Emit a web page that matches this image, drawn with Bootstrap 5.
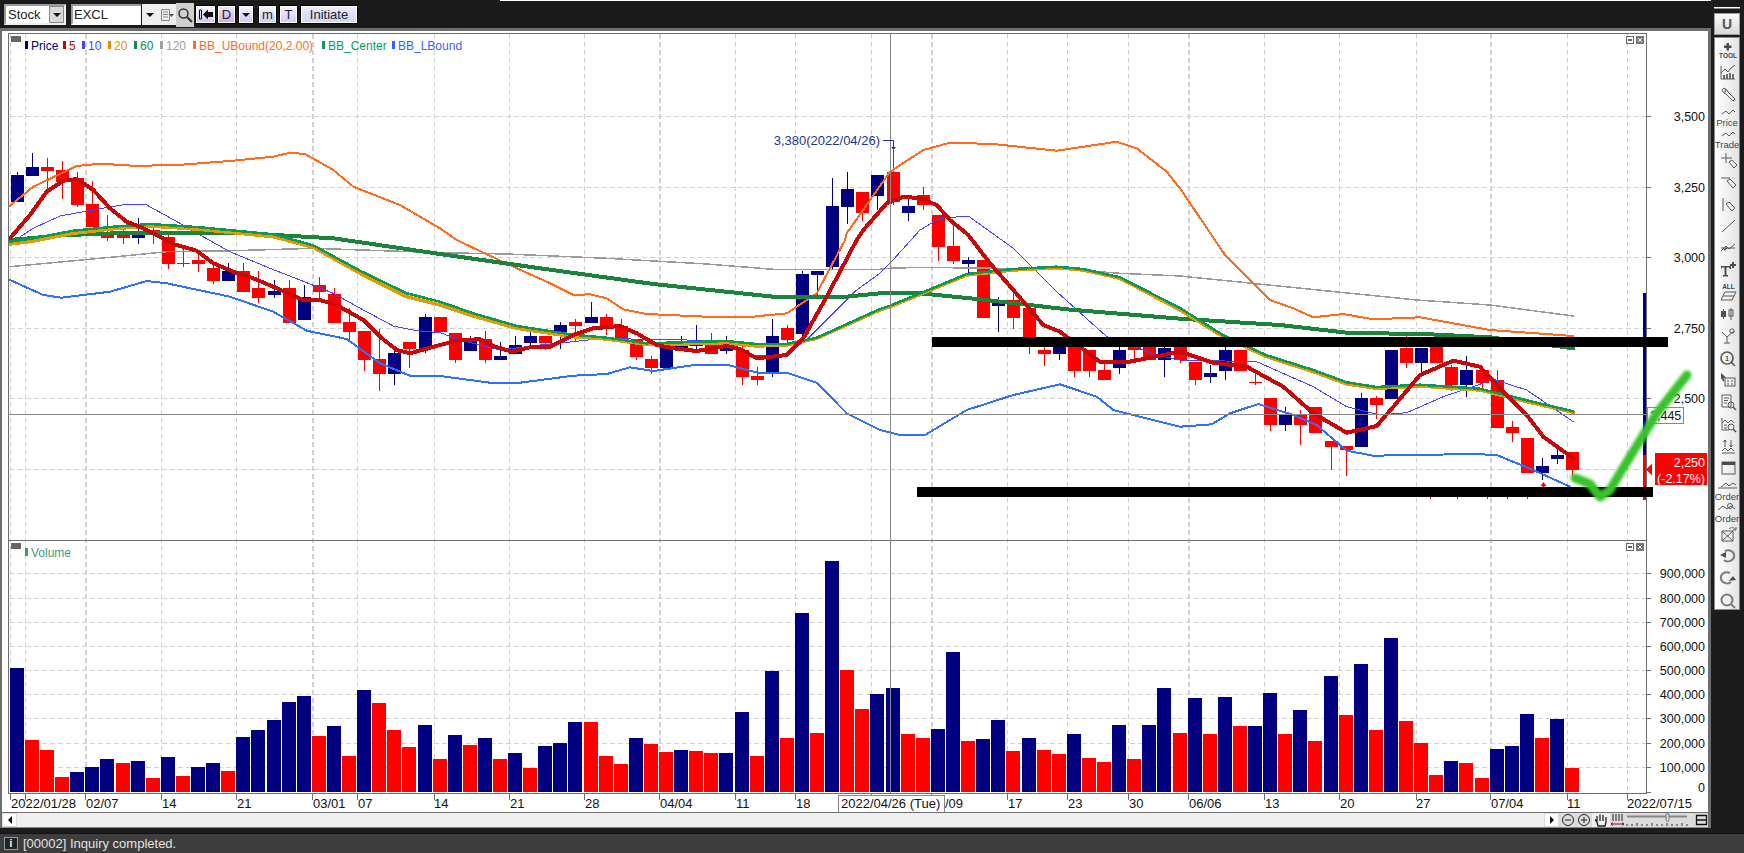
<!DOCTYPE html>
<html lang="en">
<head>
    <meta charset="UTF-8">
    <meta name="viewport" content="width=device-width, initial-scale=1.0">
    <title>Stock Chart</title>
    <link href="https://cdn.jsdelivr.net/npm/bootstrap@5.3.0/dist/css/bootstrap.min.css" rel="stylesheet">
    <style>
        html, body { height: 100%; }
        body { background: #1c1c1c; overflow: hidden; font: 12px/1 "Liberation Sans", Arial, sans-serif; color: #222; }
        .app-left { width: 1711px; }
        .app-right { width: 33px; padding-left: 3px; }
        .top-line { height: 1px; background: #fff; margin-left: 500px; }
        .top-bar { height: 27px; padding-left: 4px; background: #1a1a1a; }
        .stock-box { width: 62px; height: 21px; background: #fff; border: 2px solid #9a9a9a; border-right-color: #eee; border-bottom-color: #eee; font-size: 13px; padding-left: 2px; }
        .code-box { width: 70px; height: 21px; background: #fff; border: 2px solid #9a9a9a; border-right: 0; border-bottom-color: #fff; font-size: 13px; padding-left: 1px; margin-left: 5px; }
        .arrow-box { width: 15px; height: 100%; background: #d8d8d8; border: 1px solid #8a8a8a; margin-left: auto; }
        .down-tri { width: 0; height: 0; border-left: 4px solid transparent; border-right: 4px solid transparent; border-top: 4px solid #111; }
        .light-cell { height: 21px; background: #eeeeee; }
        .w-drop { width: 16px; margin-left: 1px; }
        .w-memo { width: 18px; }
        .mag-cell { width: 18px; height: 24px; background: #cfcfcf; margin-right: 1px; }
        .btn.tb-btn { height: 19px; padding: 0; border: 1px solid #000; border-radius: 0; box-shadow: inset 0 0 0 1px #fff; background: linear-gradient(#f6f6ff, #c9c9f4); color: #222; font-size: 13px; line-height: 16px; }
        .btn.tb-purple { background: linear-gradient(#f2e4ff, #d2a8ee); }
        .btn.tb-plain { background: linear-gradient(#ececff, #d2d2f4); }
        .w-21 { width: 21px; }
        .w-19 { width: 19px; }
        .w-16 { width: 16px; }
        .w-58 { width: 58px; }
        .gap-l1 { margin-left: 1px; }
        .gap-l2 { margin-left: 2px; }
        .chart-win { height: 800px; background: #fff; border-left: 2px solid #6e6e6e; border-top: 3px solid #6e6e6e; border-right: 3px solid #6e6e6e; }
        .chart-svg { display: block; }
        .scroll-row { height: 16px; background: #f0f0f0; border-top: 1px solid #6e6e6e; border-bottom: 1px solid #8a8a8a; }
        .scroll-arrow { width: 15px; background: #fff; border: 1px solid #dcdcdc; }
        .tri-left { width: 0; height: 0; border-top: 4px solid transparent; border-bottom: 4px solid transparent; border-right: 4px solid #111; }
        .tri-right { width: 0; height: 0; border-top: 4px solid transparent; border-bottom: 4px solid transparent; border-left: 4px solid #111; }
        .zoom-tools { width: 149px; background: #dcdcdc; }
        .hand-cell { background: #efefef; }
        .gap-strip { height: 5px; }
        .status-bar { height: 20px; background: #3d3d3d; border-top: 1px solid #111; color: #e4e4e4; font-size: 13px; padding-left: 4px; }
        .info-box { width: 14px; height: 13px; background: #222; border: 1px solid #999; color: #fff; font-weight: 700; font-size: 10px; margin-right: 5px; }
        .right-line { height: 2px; background: #fff; margin: 7px 0 4px; width: 26px; border-bottom: 1px solid #888; }
        .u-btn { width: 26px; height: 22px; background: linear-gradient(#fdfdfd, #d8d8d8); border: 1px solid #9c9c9c; color: #555; font-weight: 700; font-size: 14px; margin-bottom: 2px; }
        .tool-box { width: 26px; height: 573px; padding-top: 2px; background: linear-gradient(90deg, #fff, #e4e4e4); border: 1px solid #8a8a8a; border-right-color: #777; }
        .tool-item { display: block; width: 24px; height: 22px; }
        .tool-item path, .tool-item rect, .tool-item circle, .tool-item polyline { fill: none; stroke: #5a5a5a; stroke-width: 1; }
        .tool-item .solid { fill: #4c4c4c; stroke: none; }
        .tool-item .heavy { stroke-width: 1.7; }
        .tool-item .pale { stroke: #7c7c7c; stroke-width: 2; }
        .tool-item text { font-family: "Liberation Sans", Arial, sans-serif; fill: #444; text-anchor: middle; }
        .tool-item .tiny { font-size: 6.5px; font-weight: 700; }
        .tool-item .word { font-size: 9.5px; }
        .chart-svg text { font-family: "Liberation Sans", Arial, sans-serif; font-size: 12.5px; fill: #111; }
        .chart-svg .tick-r { text-anchor: end; }
        .chart-svg .legend { font-size: 12px; }
        .chart-svg .date-tx { font-size: 13px; }
        .chart-svg .ink-white { fill: #fff; }
        .chart-svg .crisp { shape-rendering: crispEdges; }
        .chart-svg .note-tx { font-size: 13px; fill: #1c3590; }
        .check-mark { filter: blur(1.5px); }
    </style>
</head>
<body>
    <div class="d-flex">
        <div class="app-left">
            <div class="top-line"></div>
            <div class="top-bar d-flex align-items-center">
                <div class="stock-box d-flex align-items-center">Stock<span class="arrow-box d-flex align-items-center justify-content-center"><span class="down-tri"></span></span></div>
                <div class="code-box d-flex align-items-center">EXCL</div>
                <div class="light-cell w-drop d-flex align-items-center justify-content-center"><span class="down-tri"></span></div>
                <div class="light-cell w-memo d-flex align-items-center justify-content-center">
                    <svg width="15" height="14" viewBox="0 0 15 14"><path d="M1.5 1.5h8v11h-8zM3 4h5M3 6.500h5M3 9h5" fill="none" stroke="#888"/><path d="M9 6h5l-2.500 3z" fill="#555"/></svg>
                </div>
                <div class="mag-cell d-flex align-items-center justify-content-center">
                    <svg width="16" height="16" viewBox="0 0 16 16"><circle cx="6.500" cy="6.500" r="4.500" fill="none" stroke="#333" stroke-width="1.500"/><path d="M10 10l5 5" stroke="#333" stroke-width="2.200"/></svg>
                </div>
                <div class="d-flex align-items-center">
                    <button class="btn tb-btn w-21 d-flex align-items-center justify-content-center" type="button">
                        <svg width="16" height="11" viewBox="0 0 16 11"><path d="M1.500 1h2v9h-2z" fill="none" stroke="#111"/><path d="M5 5.500L10 .5V3h5v5h-5v2.500z" fill="#111"/></svg>
                    </button>
                    <button class="btn tb-btn tb-purple w-19 gap-l1" type="button">D</button>
                    <button class="btn tb-btn w-16 gap-l2 d-flex align-items-center justify-content-center" type="button"><span class="down-tri"></span></button>
                    <button class="btn tb-btn w-19 ms-1" type="button">m</button>
                    <button class="btn tb-btn w-19 gap-l2" type="button">T</button>
                    <button class="btn tb-btn tb-plain w-58 gap-l2" type="button">Initiate</button>
                </div>
            </div>
            <div class="chart-win">
                <svg id="chart" class="chart-svg" width="1706" height="781" viewBox="2 31 1706 781"></svg>
                <div class="scroll-row d-flex">
                    <div class="scroll-arrow d-flex align-items-center justify-content-center"><span class="tri-left"></span></div>
                    <div class="flex-grow-1"></div>
                    <div class="scroll-arrow d-flex align-items-center justify-content-center"><span class="tri-right"></span></div>
                    <div class="zoom-tools d-flex">
                        <svg width="17" height="14" viewBox="0 0 17 14"><circle cx="9" cy="7" r="5.500" fill="none" stroke="#222"/><path d="M6 7h6" stroke="#222"/></svg>
                        <svg width="16" height="14" viewBox="0 0 16 14"><circle cx="8" cy="7" r="5.500" fill="none" stroke="#222"/><path d="M5 7h6M8 4v6" stroke="#222"/></svg>
                        <svg class="hand-cell" width="18" height="14" viewBox="0 0 18 14"><path d="M5 9L3 6.500M5 9V3M8 8V1.500M11 8V2M14 9V4M5 9l1 4h7l1-4" fill="none" stroke="#222" stroke-width="1.300"/></svg>
                        <svg width="15" height="14" viewBox="0 0 15 14"><path d="M3 1v7M6 1v7M9 1v7M12 1v7" stroke="#222"/><path d="M1 11h13M1 11l2-1.500M1 11l2 1.500M14 11l-2-1.500M14 11l-2 1.500" fill="none" stroke="#7a1030"/></svg>
                        <svg width="70" height="14" viewBox="0 0 70 14"><path d="M2 3.500h60" stroke="#888" stroke-width="2"/><path d="M41 1h3v6l-1.500 2L41 7z" fill="#ddd" stroke="#777"/><path d="M2 13v-2M7 13v-2M12 13v-3M17 13v-2M22 13v-2M27 13v-3M32 13v-2M37 13v-2M42 13v-3M47 13v-2M52 13v-2M57 13v-3M62 13v-2" stroke="#333"/></svg>
                        <svg width="13" height="14" viewBox="0 0 13 14"><path d="M1.500 2.500h10v9h-10zM1.500 7h10" fill="none" stroke="#111" stroke-width="1.300"/></svg>
                    </div>
                </div>
            </div>
            <div class="gap-strip"></div>
        </div>
        <div class="app-right">
            <div class="right-line"></div>
            <div class="u-btn d-flex align-items-center justify-content-center">U</div>
            <div id="tools" class="tool-box"></div>
        </div>
    </div>
    <div class="status-bar d-flex align-items-center">
        <span class="info-box d-flex align-items-center justify-content-center">i</span>
        <span>[00002] Inquiry completed.</span>
    </div>

    <script>
        // candles: colour, body top, body bottom, high, low, as read off the chart
        const block = (by, rows) => rows.map(r => [r[0], by + r[1] / 3, by + r[2] / 3, by + r[3] / 3, by + r[4] / 3]);
        const candles = [
            ...block(140, [['b',105,185,97,185],['b',81,107,40,107],['r',81,93,55,150],['r',90,126,63,177],['r',115,194,96,200],['r',192,261,124,261],['r',276,293,225,303],['r',285,293,270,312],['b',282,293,234,312],['r',270,285,262,312],['r',291,372,285,387],['r',369,372,327,381],['r',360,372,339,396],['r',384,423,378,432],['b',393,423,369,423],['r',393,456,369,456],['r',444,474,393,489],['b',453,465,420,474],['r',444,549,420,549],['b',471,540,435,540],['r',435,456,411,480],['r',462,549,444,549],['r',546,576,504,600],['r',573,660,573,693],['r',657,702,567,753],['b',639,702,630,735],['r',606,627,606,684],['b',531,627,522,640],['r',531,576,531,576]]),
            ...block(240, [['r',279,360,279,369],['b',303,333,288,333],['r',297,360,273,369],['b',348,360,306,360],['b',315,342,288,342],['b',288,309,276,323],['r',288,309,288,330],['b',255,280,246,327],['r',246,258,237,306],['b',231,249,186,249],['r',231,258,222,285],['r',258,300,237,309],['r',300,351,300,360],['r',357,384,348,402],['b',324,384,315,384],['b',309,324,288,324],['b',309,318,255,330],['r',309,342,279,342],['b',318,333,288,342],['r',330,411,315,435],['r',408,420,381,435],['b',288,399,237,411],['r',264,300,255,309]]),
            ...block(130, [['b',432,612,423,622],['b',423,435,423,495],['b',228,411,144,417],['b',177,231,126,282],['r',186,249,186,273],['b',135,198,135,240],['r',126,216,60,225],['b',228,249,207,273],['r',195,225,171,240],['r',255,351,255,393],['r',348,393,285,402],['b',390,402,381,432],['r',390,564,390,564],['b',520,528,501,606],['r',510,564,490,597],['r',534,640,534,672],['r',660,672,640,708],['b',640,672,640,690],['r',640,723,640,741],['r',660,723,660,741],['r',720,750,700,750],['b',660,714,650,732],['r',640,660,640,695],['r',640,690,640,690],['b',654,690,640,741],['r',650,690,650,700]]),
            ...block(300, [['r',186,240,186,255],['b',219,231,195,249],['b',150,213,141,240],['r',150,213,150,213],['r',246,249,210,255],['r',294,375,294,393],['b',345,375,321,393],['r',345,375,330,435],['r',321,399,321,399],['r',423,441,423,510],['r',438,450,438,528],['b',294,441,279,441],['r',294,315,288,357],['b',150,297,150,297],['r',144,189,108,204],['b',144,189,144,231],['r',141,189,141,189],['r',201,255,195,273],['b',210,255,168,291],['r',210,249,200,264],['r',240,384,210,384],['r',381,399,363,426],['r',414,519,414,519],['b',498,519,474,540],['b',465,477,432,492],['r',456,510,456,528]])
        ];

        // volume bars: colour and top of bar, same reading
        const volumes = 'b384 r600 r630 r711 b696 b681 b657 r669 b663 r714 b651 r708 b681 b669 r693 b591 b570 b540 b486 b468 r588 b558 r648 b450 r489 r570 r621 b555 r657 b585 r615 b594 r657 b639 r684 b618 b609 b546 r546 r648 r672 b594 r612 r636 b630 r633 r639 b639 b516 r648 b393 r594 b219 r579 b63 r390 r507 b462 b444 r582 r594 b567 b336 r603 b597 b540 r633 b594 r630 r642 b582 r654 r666 b555 r657 b555 b444 r579 b474 r582 b471 r558 b558 b459 r582 b510 r603 b408 r525 b372 r570 b294 r543 r609 r705 b663 r669 r714 b627 b618 b522 r594 b537 r684'.split(' ');

        const z6 = a => [0, 140, a], z7 = a => [440, 240, a], z8 = a => [780, 130, a], z9 = a => [1180, 300, a];
        // joins the zoomed readings into one polyline, dropping overlap
        function joinPts(...parts) {
            const out = [];
            let last = -1;
            parts.forEach(([bx, by, a]) => {
                for (let i = 0; i < a.length; i += 2) {
                    const x = bx + a[i] / 3, y = by + a[i + 1] / 3;
                    if (x > last) { out.push(x.toFixed(1) + ',' + y.toFixed(1)); last = x; }
                }
            });
            return out.join(' ');
        }

        const lines = [
            { c: '#9a9a9a', w: 1.5, p: joinPts(z6([30,380,300,355,500,335,700,332,940,325,1320,338]), z7([200,42,500,55,800,72,1000,88,1320,88]), z8([330,415,420,412,860,418,1020,430,1200,438]), z9([710,0,930,15,1180,48])) },
            { c: '#ff6a1f', w: 2, p: joinPts(z6([30,197,100,140,230,78,300,71,400,77,520,76,700,62,820,50,870,38,915,42,1000,90,1060,140,1200,195,1320,265]), z7([50,0,220,80,320,125,400,165,450,163,500,175,550,208,620,222,840,232,920,232,1040,220,1130,160,1215,0]), z8([200,310,330,125,430,60,510,38,640,42,830,62,1010,35,1070,55,1160,125,1200,175]), z9([135,-135,270,0,340,25,400,52,490,42,580,58,720,52,930,90,1180,108])) },
            { c: '#2f6fff', w: 2, p: joinPts(z6([30,420,130,465,185,473,330,455,440,423,500,430,690,470,820,515,920,572,1040,597,1140,670,1230,707,1320,708]), z7([0,408,150,428,240,428,400,407,500,402,570,382,640,393,770,374,860,374,960,400,1040,398,1130,428,1220,520,1320,570]), z8([0,728,110,760,190,840,270,885,360,915,435,915,560,840,700,795,840,763,950,800,1000,840,1200,890]), z9([95,373,150,340,235,312,340,345,410,375,500,452,580,467,880,462,950,465,1060,510,1170,560])) },
            { c: '#4444ff', w: 1, p: joinPts(z6([30,310,100,265,180,228,290,208,380,193,440,195,540,250,600,285,690,335,810,385,900,420,1000,460,1090,510,1180,558,1250,572,1320,578]), z7([0,280,60,300,180,330,300,315,400,305,490,295,540,295,620,300,700,298,780,302,860,315,945,347,1030,345,1100,300,1250,150,1320,100]), z8([330,400,420,300,480,265,565,258,700,355,830,485,980,620,1060,650,1130,675,1200,690]), z9([230,185,400,260,500,320,600,345,680,338,790,290,880,260,940,238,1040,270,1180,365])) },
            { c: '#1a843c', w: 4, p: joinPts(z6([30,300,200,285,400,278,700,278,1000,295,1320,342]), z7([300,85,640,132,1000,170,1200,172,1320,160]), z8([420,490,600,508,860,538,1200,566]), z9([300,75,500,98,750,103,930,112,1180,145])) },
            { c: '#e09c00', w: 3.5, p: joinPts(z6([30,312,100,303,220,280,340,266,450,258,600,268,820,290,940,322,1080,400,1220,470,1320,495]), z7([0,195,100,228,230,265,400,290,500,297,620,313,860,310,950,318,1040,315,1130,295,1320,210]), z8([330,530,440,485,560,435,700,420,830,413,910,420,1020,445,1200,540]), z9([130,110,260,170,400,215,500,252,590,265,720,258,900,270,1040,305,1180,337])) },
            { c: '#0a9a55', w: 2.5, p: joinPts(z6([30,305,100,295,220,272,340,260,450,252,600,262,820,283,940,316,1080,392,1220,460,1320,485]), z7([0,185,100,220,230,258,400,284,500,293,620,310,860,303,950,312,1040,312,1130,293,1320,207]), z8([330,527,440,482,560,432,700,417,830,410,910,417,1020,442,1200,534]), z9([130,106,260,166,400,210,500,247,590,261,720,254,900,266,1040,301,1180,334])) },
            { c: '#c80808', w: 4, p: joinPts(z6([30,295,90,225,140,155,190,122,230,117,280,150,330,205,380,245,430,265,480,290,520,312,590,332,640,370,700,395,760,415,820,440,870,462,910,480,960,480,1010,495,1090,540,1140,590,1190,630,1230,640,1320,615]), z7([0,310,60,300,120,298,160,318,215,335,270,322,330,320,400,285,460,265,540,258,590,280,650,315,700,325,770,333,860,318,900,327,950,355,1040,345,1090,295,1160,170,1250,0]), z8([250,300,320,220,370,200,420,205,470,225,510,270,565,315,630,400,700,480,790,585,840,605,900,650,960,695,1040,697,1200,665]), z9([100,188,200,200,310,260,400,340,500,398,590,378,640,320,720,225,820,182,900,200,960,265,1040,345,1090,410,1180,475])) }
        ];

        const vGrid = [[10,0],[25,0],[85,1],[161,0],[236,0],[312,1],[357,0],[434,0],[509,0],[584,0],[659,1],[735,0],[795,0],[871,0],[931,1],[1007,0],[1067,0],[1128,0],[1188,1],[1264,0],[1339,0],[1416,0],[1490,1],[1567,0],[1627,0]];
        const priceTicks = [['3,500',116.5],['3,250',187.5],['3,000',257.5],['2,750',328.5],['2,500',398.5],['',469.5]];
        const volTicks = [['900,000',573.5],['800,000',598.5],['700,000',622.5],['600,000',646.5],['500,000',670.5],['400,000',694.5],['300,000',718.5],['200,000',743.5],['100,000',767.5]];
        const dates = [['2022/01/28',10],['02/07',85],['14',161],['21',236],['03/01',312],['07',357],['14',433],['21',509],['28',584],['04/04',659],['11',735],['18',795],['/09',944],['17',1007],['23',1067],['30',1128],['06/06',1188],['13',1264],['20',1339],['27',1415],['07/04',1490],['11',1566],['2022/07/15',1626]];
        const legend = [['#00007f','Price',25,'#00007f'],['#d00000','5',63,'#d00000'],['#4444ff','10',82,'#4444ff'],['#e09000','20',108,'#e09000'],['#0a8a50','60',134,'#0a8a50'],['#a0a0a0','120',160,'#a0a0a0'],['#ff6a2a','BB_UBound(20,2.00)',193,'#ff6a2a'],['#0a9a60','BB_Center',322,'#0a9a60'],['#3366ff','BB_LBound',392,'#3366ff']];

        let svg = '';
        // grid
        vGrid.forEach(([x, thick]) => {
            const w = thick ? 2 : 1;
            svg += `<path class="crisp" d="M${x + .5} 34V793" stroke="#d2d2d2" stroke-width="${w}" stroke-dasharray="5 3" fill="none"/>`;
            svg += `<path class="crisp" d="M${x + .5} 793V800" stroke="#6e6e6e"/>`;
        });
        priceTicks.concat(volTicks).forEach(([label, y]) => {
            svg += `<path class="crisp" d="M10 ${y}H1646" stroke="#d2d2d2" stroke-dasharray="5 3"/>`;
            svg += `<path class="crisp" d="M1646 ${y}H1651" stroke="#6e6e6e"/>`;
            if (label) svg += `<text class="tick-r" x="1705" y="${y + 4.5}">${label}</text>`;
        });
        svg += `<text class="tick-r" x="1705" y="792">0</text>`;
        svg += `<path class="crisp" d="M1646 792.500H1651" stroke="#6e6e6e"/>`;

        // candles and volume share one x step
        candles.forEach((k, i) => {
            const cx = Math.floor(17.3 + 15.1 * i);
            const col = k[0] === 'b' ? '#000080' : '#ff0000';
            svg += `<rect class="crisp" x="${cx}" y="${k[3]}" width="1" height="${Math.max(k[4] - k[3], 1)}" fill="${col}"/>`;
            svg += `<rect class="crisp" x="${cx - 6}" y="${k[1]}" width="13" height="${Math.max(k[2] - k[1], 1)}" fill="${col}"/>`;
        });
        volumes.forEach((v, i) => {
            const cx = Math.floor(17.3 + 15.1 * i);
            const top = 540 + Number(v.slice(1)) / 3;
            svg += `<rect class="crisp" x="${cx - 7}" y="${top}" width="14" height="${792 - top}" fill="${v[0] === 'b' ? '#000080' : '#ff0000'}"/>`;
        });
        lines.forEach(l => {
            svg += `<polyline class="crisp" points="${l.p}" fill="none" stroke="${l.c}" stroke-width="${l.w}" stroke-linejoin="round" stroke-linecap="round"/>`;
        });

        // marker bar beside the price axis
        svg += `<rect class="crisp" x="1643" y="293" width="3" height="162" fill="#000080"/><rect class="crisp" x="1643" y="455" width="3" height="45" fill="#ff0000"/>`;

        // pane frames and crosshair
        svg += `<path class="crisp" d="M8.500 33.500H1646.500V793.500H8.500ZM8.500 540.500H1646.500" fill="none" stroke="#6e6e6e" stroke-width="1.500"/>`;
        svg += `<path class="crisp" d="M890 33V793M8 414H1646" stroke="#888" fill="none"/>`;

        // small wick ends under the support line, and the low marker
        [1430, 1457, 1487, 1507, 1527].forEach(x => { svg += `<rect x="${x}" y="497" width="1" height="2" fill="#ff0000"/>`; });
        svg += `<path d="M1543.500 482l3 4h-2v2h-2v-2h-2z" fill="#ff0000"/>`;

        // hand-drawn lines on top of the chart
        svg += `<rect class="crisp" x="932" y="337" width="736" height="10" fill="#000"/><rect class="crisp" x="917" y="487" width="736" height="10" fill="#000"/>`;

        // labels
        svg += `<text class="tick-r note-tx" x="880" y="145">3,380(2022/04/26)</text>`;
        svg += `<path d="M883 140.500H893.500V147" fill="none" stroke="#1c3590"/><path d="M891 147h5l-2.500 3z" fill="#1c3590"/>`;
        dates.forEach(([t, x]) => { svg += `<text class="date-tx" x="${x + 1}" y="808">${t}</text>`; });
        svg += `<rect class="crisp" x="838.500" y="795.500" width="106" height="17" fill="#fff" stroke="#888"/><text class="date-tx" x="841" y="808">2022/04/26 (Tue)</text>`;
        svg += `<rect class="crisp" x="1647.500" y="407.500" width="36" height="16" fill="#fff" stroke="#888"/><text x="1650" y="420">2,445</text>`;
        svg += `<rect class="crisp" x="1655" y="453" width="52" height="32" fill="#ff0000"/><text class="tick-r ink-white" x="1705" y="467">2,250</text><text class="tick-r ink-white" x="1705" y="483">(-2.17%)</text>`;
        svg += `<path d="M1646 469.500l6-6v12z" fill="#ff0000"/>`;

        // legends and pane buttons
        legend.forEach(([mark, text, x, ink]) => {
            svg += `<rect class="crisp" x="${x}" y="41" width="3" height="8" fill="${mark}"/><text class="legend" x="${x + 6}" y="50" style="fill:${ink}">${text}</text>`;
        });
        svg += `<rect class="crisp" x="25" y="548" width="3" height="8" fill="#3c9a5f"/><text class="legend" x="31" y="557" style="fill:#3c9a7a">Volume</text>`;
        [36, 543].forEach(y => {
            svg += `<rect class="crisp" x="11" y="${y}" width="10" height="6" fill="#666"/>`;
            svg += `<rect class="crisp" x="1626.500" y="${y + .5}" width="7" height="7" fill="#fff" stroke="#666"/><rect class="crisp" x="1628" y="${y + 3}" width="4" height="2" fill="#666"/>`;
            svg += `<rect class="crisp" x="1636" y="${y}" width="8" height="8" fill="#777"/><path d="M1638 ${y + 2}l4 4m0-4l-4 4" stroke="#fff"/>`;
        });

        // green tick drawn over everything
        svg += `<polyline class="check-mark" points="1575,478 1590,484 1600,497 1610,490 1625,465 1657,413 1687,375" fill="none" stroke="#38c22c" stroke-width="9" stroke-linecap="round" stroke-linejoin="round"/>`;

        document.getElementById('chart').innerHTML = svg;

        // right hand tool strip, drawn to the sizes read off the toolbar
        const word = t => `<text class="word" x="12" y="20">${t}</text>`;
        const tools = [
            '<path class="solid" d="M11.500 3h2.500v2.500h2.500v2.500H14v2.500h-2.500V8H9V5.500h2.500z"/><text class="tiny" x="13" y="18">TOOL</text>',
            '<path d="M6 4v13h14"/><path d="M6 11l4-4 3 3 3-4 4-3"/><path class="heavy" d="M9 17v-4M12 17v-5M15 17v-6M18 17v-5"/>',
            '<path d="M9 4L7 6l2 3 2 1 7 7 2-2-7-7-1-2-3-2zM10 5l1 2-2 1"/>',
            `<path d="M7 8l4-3 3 3 4-4 2 2"/>${word('Price')}`,
            `<path d="M7 8l4-3 3 3 4-4 2 2"/>${word('Trade')}`,
            '<path d="M6 8h11M11 3v10"/><path d="M14 12l3-2 5 5-3 3z"/>',
            '<path d="M6 6h9"/><path d="M12 9l3-2 6 6-3 3z"/>',
            '<path d="M8 4v13"/><path d="M11 10l3-2 6 6-3 3z"/>',
            '<path d="M7 16L20 4"/>',
            '<path d="M6 13l5-5 3 3 6-5M6 10h14"/><path class="heavy" d="M9 12l3-2"/>',
            '<path class="solid" d="M6 6h10v3h-1l-1-1.500h-2.500V15H13v1.500H8V15h1.500V7.500H7L6 9zM17 2h2v2h2v2h-2v2h-2V6h-2V4h2z"/>',
            '<text class="tiny" x="13.500" y="7">ALL</text><path d="M6 18l4-8h11l-4 8zM8 14h11"/>',
            '<rect class="solid" x="6" y="7" width="5" height="6"/><path d="M8.500 5v10M16 4v12"/><rect x="14" y="6" width="4" height="6"/>',
            '<path d="M7 6l5 5 7-6M12 11v6M9 17h6"/><circle cx="17" cy="5" r="2.200"/>',
            '<circle cx="12" cy="10" r="6" class="heavy"/><text class="tiny" x="12" y="12.500">1</text><path class="heavy" d="M16 14l4 4"/>',
            '<path class="solid" d="M6 3l5 4.500-2.500.5 1 3-1.500.5-1-3-1 1z"/><rect x="10" y="8" width="10" height="8"/><path d="M12 11h2M16 11h2M12 14h2M16 14h2"/>',
            '<path d="M7 3h9v12H7zM9 6h5M9 8.500h4M9 11h3"/><circle cx="16" cy="13" r="3"/><path class="heavy" d="M18 15l3 3"/>',
            '<path d="M7 4v12h7M7 9l3-3 3 3 3-3 3 3M9 11h3M9 14h3"/><circle cx="16" cy="13" r="3"/><path class="heavy" d="M18 15l3 3"/>',
            '<path d="M7 15l3-3 3 3 3-3 3 3M7 17h13"/><path d="M10 4v7M8.500 6L10 4l1.500 2M16 4v7M14.500 9l1.500 2 1.500-2"/>',
            '<rect x="7" y="4" width="13" height="12"/><rect class="solid" x="7" y="4" width="13" height="3"/>',
            `<path d="M3 8h19M6 7l5-4 3 3 4-3 3 2"/>${word('Order')}`,
            `<path d="M3 8l5-4 4 3 4-3 4 3"/><circle cx="15" cy="4" r="2.500"/>${word('Order')}`,
            '<path d="M7 7h11v10H7zM7 7l11 10M18 7L7 17"/><path d="M14 5c2-2 5-2 7 1M21 3v3h-3"/>',
            '<path class="pale" d="M10 5c5-2 10 1 9 6-1 4-7 6-10 3"/><path class="solid" d="M5 9l6-3v6z"/>',
            '<path class="pale" d="M15 5c-5-2-10 1-9 6 1 4 7 6 10 3"/><path class="solid" d="M21 12l-7 1 4-5z"/>',
            '<circle class="pale" cx="12" cy="10" r="5.500"/><path class="pale" d="M16 14l4 4"/>'
        ];
        document.getElementById('tools').innerHTML = tools.map(t => `<svg class="tool-item" viewBox="0 0 24 22">${t}</svg>`).join('');
    </script>

    <script src="https://cdn.jsdelivr.net/npm/bootstrap@5.3.0/dist/js/bootstrap.bundle.min.js"></script>
</body>
</html>
